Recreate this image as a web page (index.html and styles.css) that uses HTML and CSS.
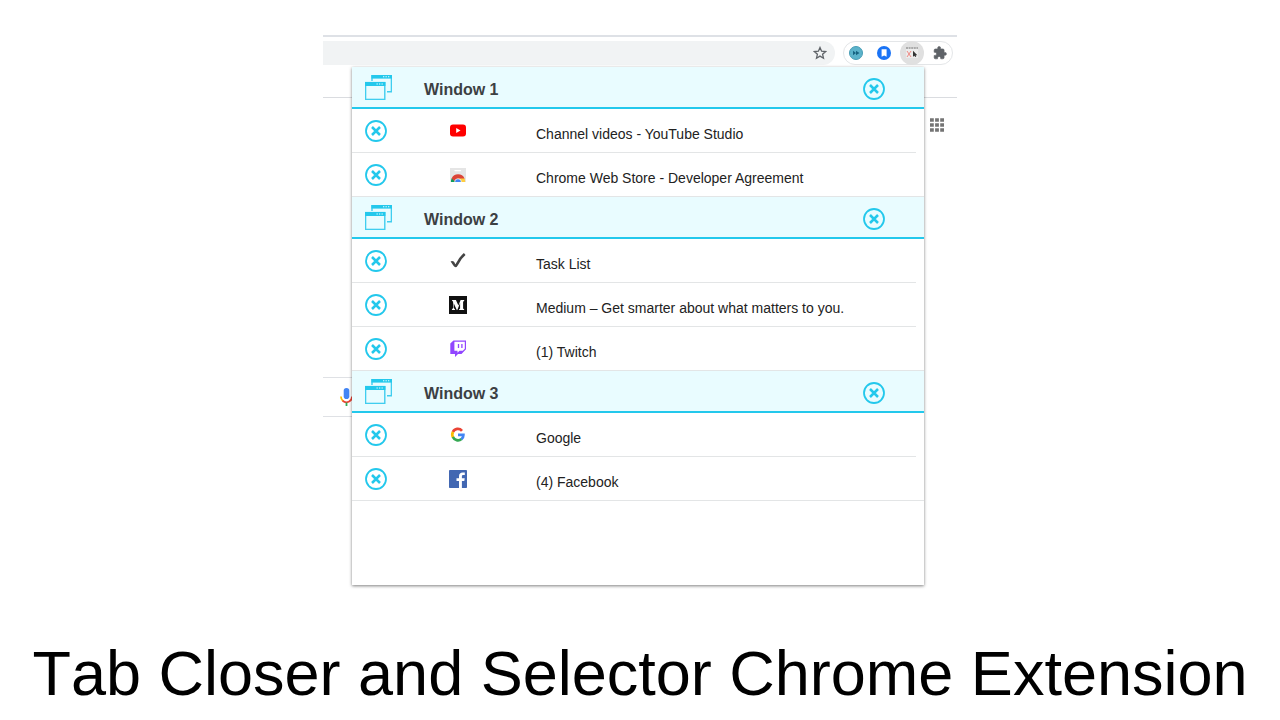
FILE: index.html
```html
<!DOCTYPE html>
<html lang="en">
<head>
<meta charset="utf-8">
<meta name="viewport" content="width=device-width, initial-scale=1">
<title>Tab Closer and Selector Chrome Extension</title>
<link rel="stylesheet" href="styles.css">
</head>
<body>
<svg class="defs" aria-hidden="true">
  <symbol id="close" viewBox="0 0 22 22">
    <circle cx="11" cy="11" r="10" fill="none" stroke="#23c8ec" stroke-width="1.8"/>
    <path d="M7 7l8 8M15 7l-8 8" stroke="#23c8ec" stroke-width="2.500"/>
  </symbol>
  <symbol id="windows" viewBox="0 0 27 25">
    <path d="M7 6V.8h19.400v16H22" fill="none" stroke="#40cdef" stroke-width="1.400"/>
    <path d="M6.400 0H27v3.600H6.400z" fill="#23c8ec"/>
    <rect x=".6" y="7.600" width="19.200" height="16.800" fill="none" stroke="#40cdef" stroke-width="1.400"/>
    <path d="M0 7h20.400v4H0z" fill="#23c8ec"/>
    <path d="M18 1.800h6.500M11.500 9h6.500" stroke="#e8fcff" stroke-width="1.100" stroke-dasharray="1.300 1.200"/>
  </symbol>
</svg>
<main class="stage">
  <div class="browser">
    <div class="page">
      <div class="toolbar">
        <div class="omnibox">
          <button class="tool" aria-label="Bookmark">
            <svg width="14" height="14" viewBox="0 0 14 14"><path d="M7 1.500l1.600 3.700 4 .4-3 2.700.9 3.900L7 10.100l-3.500 2.100.9-3.900-3-2.700 4-.4z" fill="none" stroke="#5f6368" stroke-width="1.300"/></svg>
          </button>
        </div>
        <div class="extensions">
          <button class="tool" aria-label="Fast forward">
            <svg width="14" height="14" viewBox="0 0 14 14"><circle cx="7" cy="7" r="6.500" fill="#5cb3cb" stroke="#479db5"/><path d="M4 4.800L7 7 4 9.200zM7 4.800L10.500 7 7 9.200z" fill="#176482"/></svg>
          </button>
          <button class="tool" aria-label="Reader">
            <svg width="14" height="14" viewBox="0 0 14 14"><circle cx="7" cy="7" r="7" fill="#1a73f5"/><path d="M4.600 3.200h5v7.600L7.100 9.500l-2.500 1.300z" fill="#fff"/></svg>
          </button>
          <button class="tool tool-active" aria-label="Tab Closer">
            <svg width="14" height="14" viewBox="0 0 14 14"><path d="M1 2h12v10H1z" fill="#ececec"/><path d="M1 2h12" stroke="#aaa" stroke-width="2" stroke-dasharray="2 .6"/><path d="M2 5l4 6M6 5l-4 6" stroke="#ef8a84" stroke-width="1"/><path d="M8 4.800v6l1.400-1 .8 1.200 1-.5-.5-1.300h1.600z" fill="#333"/></svg>
          </button>
          <button class="tool" aria-label="Extensions">
            <svg width="14" height="14" viewBox="0 0 24 24"><path d="M20.500 11H19V7c0-1.100-.9-2-2-2h-4V3.500a2.500 2.500 0 0 0-5 0V5H4c-1.100 0-2 .9-2 2v3.800h1.500a2.700 2.700 0 0 1 0 5.400H2V20c0 1.100.9 2 2 2h3.800v-1.500a2.700 2.700 0 0 1 5.400 0V22H17c1.100 0 2-.9 2-2v-4h1.500a2.500 2.500 0 0 0 0-5z" fill="#5f6368" stroke="#5f6368"/></svg>
          </button>
        </div>
      </div>
      <div class="page-nav">
        <button class="tool" aria-label="Google apps">
          <svg width="14" height="14" viewBox="0 0 14 14"><path d="M0 2h14M0 7h14M0 12h14" stroke="#747474" stroke-width="3.600" stroke-dasharray="3.800 1.300"/></svg>
        </button>
      </div>
      <div class="searchbox">
        <button class="tool" aria-label="Search by voice">
          <svg width="13" height="18" viewBox="0 0 13 18"><rect x="3.700" y="0" width="5.600" height="11" rx="2.800" fill="#4285f4"/><path d="M1 8.500a5.500 5.500 0 0 0 2 4.500" fill="none" stroke="#fbbc05" stroke-width="1.800"/><path d="M2.600 12.600a5.500 5.500 0 0 0 9.400-4.100" fill="none" stroke="#ea4335" stroke-width="1.800"/><path d="M6.500 14.500V18" stroke="#34a853" stroke-width="1.800"/></svg>
        </button>
      </div>
    </div>

    <div class="popup">
      <section class="window">
        <header class="window-head">
          <svg class="window-icon"><use href="#windows"/></svg>
          <h2>Window 1</h2>
          <button class="close" aria-label="Close Window 1"><svg><use href="#close"/></svg></button>
        </header>
        <ul class="tabs">
          <li class="tab">
            <button class="close" aria-label="Close tab"><svg><use href="#close"/></svg></button>
            <svg class="favicon" viewBox="0 0 18 18"><rect x="1" y="2.500" width="16" height="12" rx="3" fill="#f00"/><path d="M7.200 6v5L11.500 8.500z" fill="#fff"/></svg>
            <a href="#">Channel videos - YouTube Studio</a>
          </li>
          <li class="tab">
            <button class="close" aria-label="Close tab"><svg><use href="#close"/></svg></button>
            <svg class="favicon" viewBox="0 0 18 18"><path d="M1 2h16v14H1z" fill="#e5e5e5"/><path d="M6 4.600h5.500" stroke="#fff" stroke-width="1.400" stroke-linecap="round"/><path d="M2 16a7 7 0 0 1 1-4.300L6.500 16z" fill="#0f9d58"/><path d="M9 12h6.200a7 7 0 0 1 1 4H9z" fill="#ffcd40"/><path d="M2.600 12.400A7.200 7.200 0 0 1 15.600 12.400H9L5.500 15z" fill="#db4437"/><path d="M5.400 16a3.600 3.600 0 0 1 7.200 0z" fill="#f1f1f1"/><path d="M6.200 16a2.800 2.800 0 0 1 5.600 0z" fill="#4285f4"/></svg>
            <a href="#">Chrome Web Store - Developer Agreement</a>
          </li>
        </ul>
      </section>
      <section class="window">
        <header class="window-head">
          <svg class="window-icon"><use href="#windows"/></svg>
          <h2>Window 2</h2>
          <button class="close" aria-label="Close Window 2"><svg><use href="#close"/></svg></button>
        </header>
        <ul class="tabs">
          <li class="tab">
            <button class="close" aria-label="Close tab"><svg><use href="#close"/></svg></button>
            <svg class="favicon" viewBox="0 0 18 18"><path d="M2.300 10.500C4.500 9 5 14 6.500 14 8 14 9 7.500 15.700 2" fill="none" stroke="#444" stroke-width="2.600" stroke-linejoin="round"/></svg>
            <a href="#">Task List</a>
          </li>
          <li class="tab">
            <button class="close" aria-label="Close tab"><svg><use href="#close"/></svg></button>
            <svg class="favicon" viewBox="0 0 18 18"><path d="M0 0h18v18H0z" fill="#111"/><path d="M3 4h3.900l2.500 5.500L11.600 4h3.600v.7l-1.100 1v6.800l1.100 1v.6H10v-.6l1.100-1V7L8.300 14h-.5L4.700 7.200v4.700l1.400 1.600v.6H2.900v-.6l1.200-1.600V5.800L3 4.600z" fill="#fff"/></svg>
            <a href="#">Medium – Get smarter about what matters to you.</a>
          </li>
          <li class="tab">
            <button class="close" aria-label="Close tab"><svg><use href="#close"/></svg></button>
            <svg class="favicon" viewBox="0 0 18 18"><path d="M4.500.5H17v8.800L12.500 14H9l-3 3v-3H1.300V3.600z" fill="#9146ff"/><path d="M5.400 1.800h10.400v7l-2 2h-3.300l-2 2v-2H5.400z" fill="#fff"/><path d="M9.500 4v4M12.900 4v4" stroke="#9146ff" stroke-width="1.300"/></svg>
            <a href="#">(1) Twitch</a>
          </li>
        </ul>
      </section>
      <section class="window">
        <header class="window-head">
          <svg class="window-icon"><use href="#windows"/></svg>
          <h2>Window 3</h2>
          <button class="close" aria-label="Close Window 3"><svg><use href="#close"/></svg></button>
        </header>
        <ul class="tabs">
          <li class="tab">
            <button class="close" aria-label="Close tab"><svg><use href="#close"/></svg></button>
            <svg class="favicon" viewBox="0 0 18 18"><g fill="none" stroke-width="2.700"><path d="M3.900 6A5.500 5.500 0 0 1 13 4.800" stroke="#ea4335"/><path d="M4.200 11.400a5.500 5.500 0 0 1-.2-5.600" stroke="#fbbc05"/><path d="M3.900 11a5.500 5.500 0 0 0 8.600 2" stroke="#34a853"/><path d="M9 8.900h5.400a5.500 5.500 0 0 1-2 4.300" stroke="#4285f4"/></g></svg>
            <a href="#">Google</a>
          </li>
          <li class="tab">
            <button class="close" aria-label="Close tab"><svg><use href="#close"/></svg></button>
            <svg class="favicon" viewBox="0 0 18 18"><rect width="18" height="18" rx=".8" fill="#4267b2"/><path d="M10 18v-7H7.500V8.300H10V6.200c0-2.400 1.500-3.700 3.700-3.700l2.100.1v2.500h-1.500c-1.100 0-1.400.6-1.400 1.400v1.800h2.800l-.4 2.700h-2.400v7z" fill="#fff"/></svg>
            <a href="#">(4) Facebook</a>
          </li>
        </ul>
      </section>
    </div>
  </div>
  <h1 class="caption">Tab Closer and Selector Chrome Extension</h1>
</main>
</body>
</html>
```
FILE: styles.css
```css
* {
  box-sizing: border-box;
}

body {
  margin: 0;
  background: #fff;
  color: #222;
  font-family: "Liberation Sans", Arial, sans-serif;
}

h1, h2, ul {
  margin: 0;
  padding: 0;
}

button {
  padding: 0;
  border: 0;
  background: none;
  cursor: pointer;
}

svg {
  display: block;
}

.defs {
  display: none;
}

.stage {
  display: flex;
  flex-direction: column;
  align-items: center;
  gap: 50px;
  padding-top: 35px;
}

/* The popup shares one grid cell with the page it opens over. */
.browser {
  display: grid;
  width: 100%;
  max-width: 634px;
}

.page,
.popup {
  grid-area: 1 / 1;
}

.page {
  border-top: 2px solid #dee1e6;
}

.toolbar {
  display: flex;
  gap: 8px;
  height: 61px;
  padding: 4px 4px 0 0;
  border-bottom: 1px solid #dadce0;
}

.omnibox {
  display: flex;
  flex: 1;
  align-items: center;
  justify-content: flex-end;
  height: 24px;
  padding-right: 8px;
  border-radius: 0 12px 12px 0;
  background: #f1f3f4;
}

.extensions {
  display: flex;
  align-items: center;
  gap: 14px;
  height: 24px;
  padding: 0 5px;
  border: 1px solid #e4e6e8;
  border-radius: 12px;
}

.tool {
  display: grid;
  place-items: center;
}

.tool-active {
  border-radius: 50%;
  background: #e0e0e0;
  box-shadow: 0 0 0 5px #e0e0e0;
}

.page-nav {
  display: flex;
  justify-content: flex-end;
  padding: 20px 13px 0 0;
}

.searchbox {
  display: flex;
  align-items: center;
  width: 50%;
  height: 40px;
  margin-top: 245px;
  padding-left: 17px;
  border: solid #dfe1e5;
  border-width: 1px 0;
}

.popup {
  position: relative;
  min-height: 518px;
  margin: 32px 33px 0 29px;
  background: #fff;
  box-shadow: 0 1px 3px rgba(0, 0, 0, 0.5);
}

.window-head {
  display: grid;
  grid-template-columns: 59px 1fr 22px;
  align-items: center;
  height: 42px;
  padding: 0 39px 0 13px;
  border-bottom: 2px solid #23c8ec;
  background: #e9fcff;
}

.window-icon {
  width: 27px;
  height: 25px;
}

.window-head h2 {
  padding-top: 6px;
  color: #3c4043;
  font-size: 16px;
  line-height: 20px;
}

.close svg {
  width: 22px;
  height: 22px;
}

.window-head .close {
  margin-top: 4px;
}

.tabs {
  list-style: none;
}

.tab {
  display: grid;
  grid-template-columns: 84px 87px 1fr;
  align-items: center;
  height: 44px;
  margin-right: 8px;
  padding-left: 13px;
  border-bottom: 1px solid #e3e5e6;
}

.tab:last-child {
  margin-right: 0;
}

.tab .close {
  justify-self: start;
}

.favicon {
  width: 18px;
  height: 18px;
}

.tab a {
  padding-top: 6px;
  color: #222;
  font-size: 14px;
  line-height: 20px;
  text-decoration: none;
}

.caption {
  color: #000;
  font-size: 63px;
  font-weight: 400;
  font-kerning: none;
  line-height: 76px;
  text-align: center;
}
```
